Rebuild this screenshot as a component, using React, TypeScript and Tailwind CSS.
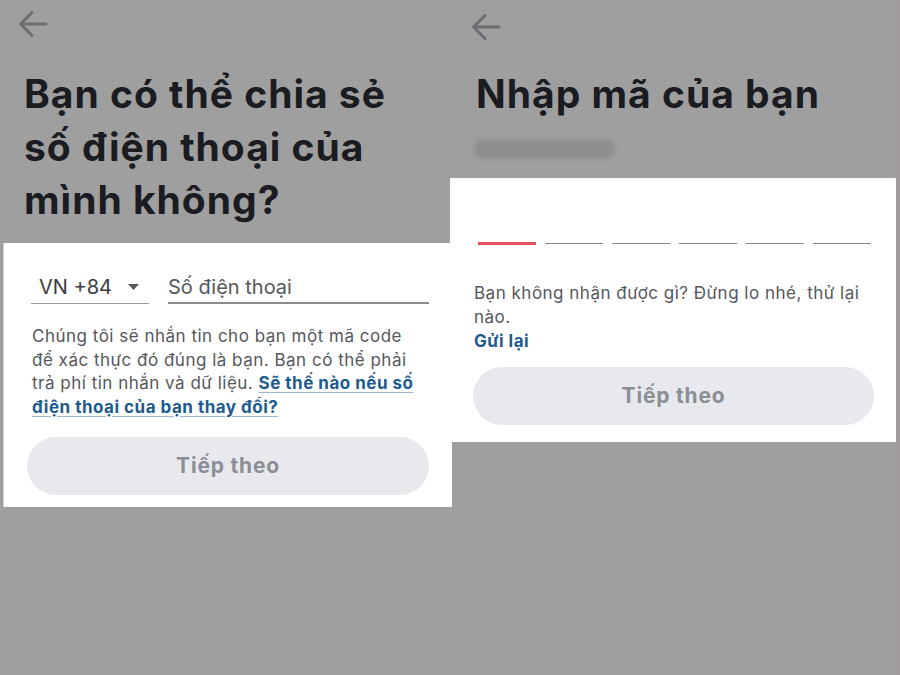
import React from "react";

const font = { fontFamily: "Inter, 'Noto Sans', sans-serif" };

function BackArrow() {
  return (
    <svg width="30" height="28" viewBox="0 0 30 28" fill="none">
      <path d="M28 14H3M14 2.5L2.5 14L14 25.5" stroke="#6b6d72" strokeWidth="3" strokeLinecap="round" strokeLinejoin="round" />
    </svg>
  );
}

function NextButton({ className }: { className: string }) {
  return (
    <button className={`h-[58px] rounded-full bg-[#e8e9ed] text-[21px] font-bold tracking-[0.8px] text-[#8b8e95] ${className}`}>
      Tiếp theo
    </button>
  );
}

export default function App() {
  return (
    <div style={font} className="grid h-[675px] w-[900px] grid-cols-[450px_446px_4px] overflow-hidden bg-[#9f9f9f]">
      {/* left: phone number */}
      <div className="flex flex-col">
        <div className="pl-[18px] pt-[10px]">
          <BackArrow />
        </div>
        <h1 className="mt-[29px] pl-[24px] text-[39px] font-bold leading-[53px] tracking-[1px] text-[#1b1c21]">
          Bạn có thể chia sẻ
          <br />
          số điện thoại của
          <br />
          mình không?
        </h1>
        <div className="relative z-10 ml-[3px] mt-[17px] h-[264px] w-[449px] border-l border-[#cfcfcf] bg-white">
          <div className="ml-[27px] mt-[25px] flex gap-[19px]">
            <div className="flex h-[36px] w-[118px] items-center justify-between border-b border-[#9a9a9a] pl-[8px] pr-[10px] pt-[3px] text-[20px] text-[#3a3b40]">
              <span>VN +84</span>
              <svg width="11" height="6" viewBox="0 0 11 6">
                <path d="M0 0H11L5.5 6Z" fill="#55575c" />
              </svg>
            </div>
            <div className="flex h-[36px] w-[261px] items-center border-b-2 border-[#8a8b90] pt-[3px] text-[20px] text-[#55575c]">
              Số điện thoại
            </div>
          </div>
          <p className="ml-[28px] mt-[21px] whitespace-nowrap text-[17px] leading-[23.5px] tracking-[0.5px] text-[#55575c]">
            Chúng tôi sẽ nhắn tin cho bạn một mã code
            <br />
            để xác thực đó đúng là bạn. Bạn có thể phải
            <br />
            trả phí tin nhắn và dữ liệu.{" "}
            <a className="font-bold text-[#1d5b8f] underline decoration-[#9fb8cf] underline-offset-[3px]">
              Sẽ thế nào nếu số
              <br />
              điện thoại của bạn thay đổi?
            </a>
          </p>
          <NextButton className="ml-[23px] mt-[18px] w-[402px]" />
        </div>
      </div>

      {/* right: verification code */}
      <div className="flex flex-col">
        <div className="pl-[21px] pt-[13px]">
          <BackArrow />
        </div>
        <h1 className="mt-[26px] pl-[26px] text-[39px] font-bold leading-[53px] tracking-[1px] text-[#1b1c21]">
          Nhập mã của bạn
        </h1>
        <div className="ml-[24px] mt-[19px] h-[20px] w-[141px] rounded-full bg-[#8e8e8e] blur-[2px]" />
        <div className="mt-[19px] h-[264px] w-[446px] bg-white">
          <div className="ml-[28px] mt-[64px] flex h-[3px] items-center gap-[9px]">
            <div className="h-[3px] w-[58px] bg-[#e1525d]" />
            {[0, 1, 2, 3, 4].map((i) => (
              <div key={i} className="h-[1.5px] w-[58px] bg-[#8a8a8a]" />
            ))}
          </div>
          <p className="ml-[24px] mt-[36px] whitespace-nowrap text-[17px] leading-[24px] tracking-[0.5px] text-[#55575c]">
            Bạn không nhận được gì? Đừng lo nhé, thử lại
            <br />
            nào.
            <br />
            <span className="font-bold text-[#1d5b8f]">Gửi lại</span>
          </p>
          <NextButton className="ml-[23px] mt-[14px] w-[401px]" />
        </div>
      </div>
      <div className="bg-[#a29b9b]" />
    </div>
  );
}
